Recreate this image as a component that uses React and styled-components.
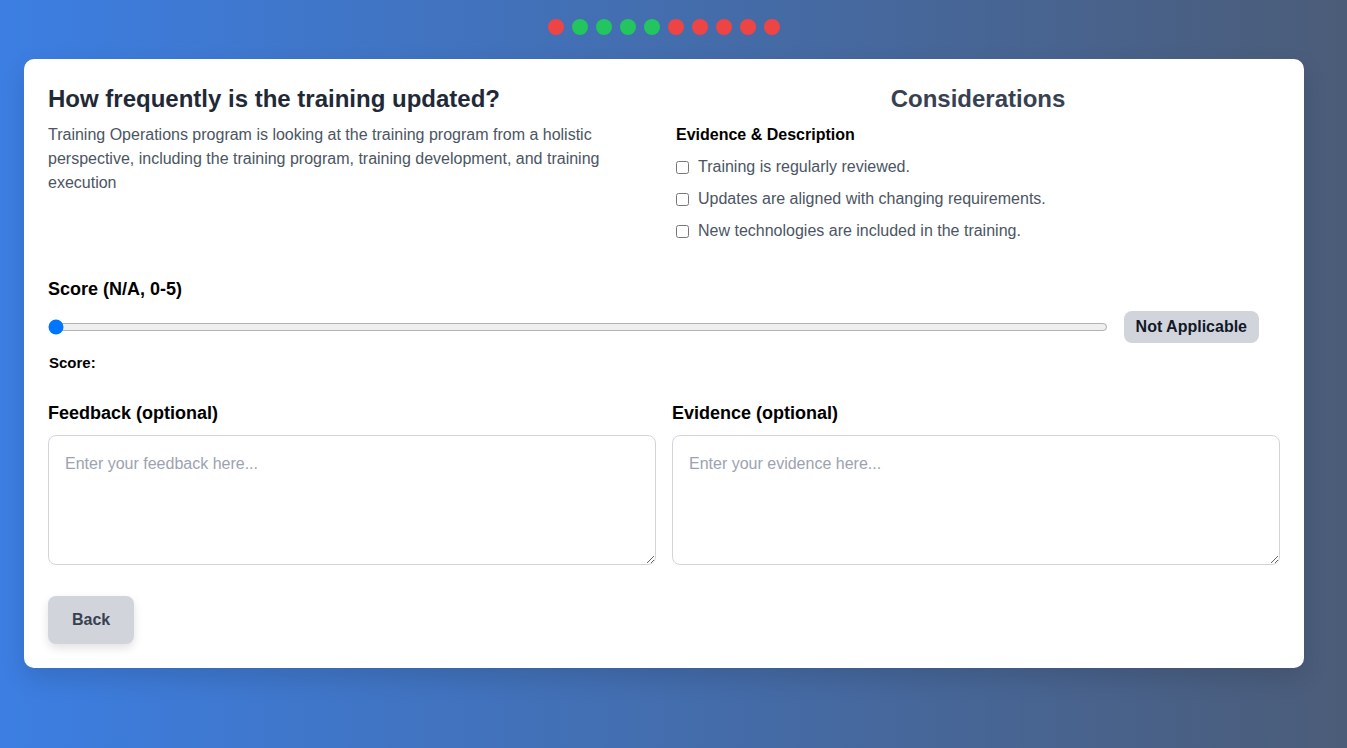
import React, { useState } from "react";
import styled, { createGlobalStyle } from "styled-components";

const GlobalStyle = createGlobalStyle`
  html, body {
    margin: 0;
    padding: 0;
  }
  body {
    font-family: "Liberation Sans", Arial, sans-serif;
    min-height: 748px;
    background: linear-gradient(to right, #3c7ee2, #4b5c78);
  }
  * {
    box-sizing: border-box;
  }
`;

const Page = styled.div`
  min-height: 748px;
  padding: 19px 24px 24px;
`;

const Dots = styled.div`
  display: flex;
  justify-content: center;
  gap: 8px;
  margin-bottom: 24px;
  padding-right: 19px;
`;

const Dot = styled.span`
  width: 16px;
  height: 16px;
  border-radius: 50%;
  background: ${(p) => (p.$done ? "#22c55e" : "#ef4444")};
`;

const Card = styled.div`
  max-width: 1280px;
  background: #ffffff;
  border-radius: 10px;
  padding: 24px;
  box-shadow: 0 10px 25px rgba(0, 0, 0, 0.12);
`;

const Top = styled.div`
  display: grid;
  grid-template-columns: 1fr 1fr;
  gap: 16px;
  margin-bottom: 26px;
`;

const Title = styled.h2`
  margin: 0 0 8px;
  font-size: 24px;
  line-height: 32px;
  font-weight: 700;
  color: #1f2937;
`;

const Lead = styled.p`
  margin: 0;
  font-size: 16px;
  line-height: 24px;
  color: #4b5563;
`;

const Side = styled.div`
  padding-left: 4px;
`;

const SideTitle = styled.h2`
  margin: 0 0 8px;
  text-align: center;
  font-size: 24px;
  line-height: 32px;
  font-weight: 700;
  color: #374151;
`;

const SubTitle = styled.h3`
  margin: 0 0 8px;
  font-size: 16px;
  line-height: 24px;
  font-weight: 700;
  color: #000;
`;

const CheckRow = styled.label`
  display: flex;
  align-items: center;
  gap: 8px;
  height: 24px;
  margin-bottom: 8px;
  font-size: 16px;
  color: #4b5563;
`;

const Box = styled.input`
  width: 13px;
  height: 13px;
  margin: 0 1px 0 0;
`;

const Label = styled.div`
  font-size: 18px;
  line-height: 24px;
  font-weight: 700;
  color: #000;
  margin-bottom: ${(p) => p.$mb || 0}px;
`;

const SliderRow = styled.div`
  display: flex;
  align-items: center;
  gap: 16px;
  margin: 10px 21px 10px 0;
`;

const Range = styled.input`
  flex: 1;
  margin: 0;
  accent-color: #0075ff;
`;

const Badge = styled.span`
  height: 32px;
  padding: 0 12px;
  display: flex;
  align-items: center;
  border-radius: 8px;
  background: #d1d5db;
  font-size: 16px;
  font-weight: 700;
  color: #111827;
`;

const ScoreText = styled.div`
  font-size: 15px;
  line-height: 20px;
  font-weight: 700;
  color: #000;
  padding-left: 1px;
  margin-bottom: 28px;
`;

const Fields = styled.div`
  display: grid;
  grid-template-columns: 1fr 1fr;
  gap: 16px;
  margin-bottom: 31px;
`;

const Area = styled.textarea`
  display: block;
  width: 100%;
  height: 130px;
  padding: 16px;
  border: 1px solid #d1d5db;
  border-radius: 8px;
  font-family: "Liberation Sans", Arial, sans-serif;
  font-size: 16px;
  line-height: 24px;
  color: #374151;
  resize: vertical;
  outline: none;

  &::placeholder {
    color: #9ca3af;
  }
`;

const Button = styled.button`
  height: 48px;
  padding: 0 24px;
  border: none;
  border-radius: 8px;
  background: #d1d5db;
  color: #374151;
  font-family: "Liberation Sans", Arial, sans-serif;
  font-size: 16px;
  font-weight: 700;
  box-shadow: 0 4px 10px rgba(0, 0, 0, 0.12);
  cursor: pointer;
`;

const progress = [false, true, true, true, true, false, false, false, false, false];

const items = [
  "Training is regularly reviewed.",
  "Updates are aligned with changing requirements.",
  "New technologies are included in the training.",
];

export default function App() {
  const [score, setScore] = useState(0);

  return (
    <Page>
      <GlobalStyle />
      <Dots>
        {progress.map((done, i) => (
          <Dot key={i} $done={done} />
        ))}
      </Dots>
      <Card>
        <Top>
          <div>
            <Title>How frequently is the training updated?</Title>
            <Lead>
              Training Operations program is looking at the training program from a holistic
              perspective, including the training program, training development, and training
              execution
            </Lead>
          </div>
          <Side>
            <SideTitle>Considerations</SideTitle>
            <SubTitle>Evidence &amp; Description</SubTitle>
            {items.map((t) => (
              <CheckRow key={t}>
                <Box type="checkbox" />
                {t}
              </CheckRow>
            ))}
          </Side>
        </Top>

        <Label>Score (N/A, 0-5)</Label>
        <SliderRow>
          <Range
            type="range"
            min="0"
            max="6"
            value={score}
            onChange={(e) => setScore(Number(e.target.value))}
          />
          <Badge>Not Applicable</Badge>
        </SliderRow>
        <ScoreText>Score:</ScoreText>

        <Fields>
          <div>
            <Label $mb={10}>Feedback (optional)</Label>
            <Area placeholder="Enter your feedback here..." />
          </div>
          <div>
            <Label $mb={10}>Evidence (optional)</Label>
            <Area placeholder="Enter your evidence here..." />
          </div>
        </Fields>

        <Button>Back</Button>
      </Card>
    </Page>
  );
}
